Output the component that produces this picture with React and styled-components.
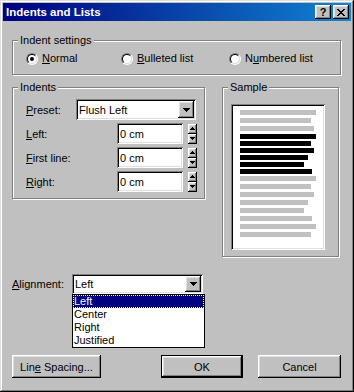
import React from "react";
import styled, { createGlobalStyle, css } from "styled-components";

const GlobalStyle = createGlobalStyle`
  html, body {
    margin: 0;
    padding: 0;
    background: #c0c0c0;
  }
  body {
    font-family: "Liberation Sans", Arial, sans-serif;
    font-size: 11px;
    color: #000;
  }
  * {
    box-sizing: border-box;
  }
`;

// classic 3d bevels
const raised = css`
  box-shadow: inset -1px -1px #000, inset 1px 1px #fff, inset -2px -2px #808080,
    inset 2px 2px #dfdfdf;
`;

const sunken = css`
  box-shadow: inset 1px 1px #808080, inset -1px -1px #fff, inset 2px 2px #000,
    inset -2px -2px #dfdfdf;
`;

const Window = styled.div`
  width: 354px;
  height: 392px;
  padding: 3px;
  background: #c0c0c0;
  display: flex;
  flex-direction: column;
  box-shadow: inset -1px -1px #000, inset 1px 1px #dfdfdf, inset -2px -2px #808080,
    inset 2px 2px #fff;
`;

const TitleBar = styled.div`
  height: 18px;
  display: flex;
  align-items: center;
  padding: 0 2px 0 3px;
  background: linear-gradient(90deg, #000080, #1084d0);
`;

const TitleText = styled.span`
  flex: 1;
  color: #fff;
  font-weight: bold;
  font-size: 11.5px;
`;

const CaptionButton = styled.span`
  width: 16px;
  height: 14px;
  margin-left: ${(p) => (p.$gap ? "2px" : "0")};
  background: #c0c0c0;
  display: grid;
  place-items: center;
  font-weight: bold;
  font-size: 11px;
  line-height: 14px;
  ${raised}
`;

const Body = styled.div`
  flex: 1;
  display: flex;
  flex-direction: column;
  padding: 0 10px 0 9px;
`;

const Group = styled.fieldset`
  margin: ${(p) => p.$margin || "0"};
  padding: 0;
  min-width: 0;
  width: ${(p) => (p.$w ? `${p.$w}px` : "auto")};
  border: 1px solid #808080;
  box-shadow: inset 1px 1px #fff, 1px 1px #fff;
`;

const Legend = styled.legend`
  margin-left: 5px;
  padding: 0 2px;
  line-height: 13px;
  background: #c0c0c0;
`;

const GroupInner = styled.div`
  padding: ${(p) => p.$pad};
`;

const RadioRow = styled.div`
  display: grid;
  grid-template-columns: 95px 108px auto;
  height: 13px;
`;

const RadioOption = styled.label`
  display: flex;
  align-items: center;
  gap: 4px;
  line-height: 13px;
`;

const RadioMark = styled.span`
  position: relative;
  flex: none;
  width: 12px;
  height: 12px;
  border-radius: 50%;
  border: 1px solid;
  border-color: #808080 #fff #fff #808080;

  &::before {
    content: "";
    position: absolute;
    inset: 0;
    border-radius: 50%;
    border: 1px solid;
    border-color: #000 #dfdfdf #dfdfdf #000;
    background: #fff;
  }

  &::after {
    content: "";
    display: ${(p) => (p.$checked ? "block" : "none")};
    position: absolute;
    left: 3px;
    top: 3px;
    width: 4px;
    height: 4px;
    border-radius: 50%;
    background: #000;
  }
`;

const MiddleRow = styled.div`
  display: flex;
  align-items: flex-start;
  gap: 17px;
  margin-top: 6px;
`;

const FieldList = styled.div`
  display: flex;
  flex-direction: column;
  gap: 3px;
`;

const FieldRow = styled.div`
  display: flex;
  align-items: center;
  justify-content: space-between;
  height: 21px;
`;

const Controls = styled.div`
  display: flex;
  align-items: center;
  gap: 5px;
`;

const Combo = styled.div`
  position: relative;
  width: ${(p) => p.$w}px;
  height: ${(p) => p.$h}px;
  margin-right: ${(p) => p.$mr || 0}px;
  padding: 2px;
  background: #fff;
  display: flex;
  align-items: stretch;
  ${sunken}
`;

const ComboText = styled.span`
  flex: 1;
  padding-left: 1px;
  display: flex;
  align-items: center;
`;

const ComboButton = styled.span`
  width: 16px;
  background: #c0c0c0;
  display: grid;
  place-items: center;
  ${raised}
`;

const Edit = styled.div`
  width: 66px;
  height: 21px;
  padding-left: 3px;
  background: #fff;
  display: flex;
  align-items: center;
  ${sunken}
`;

const Spin = styled.div`
  display: flex;
  flex-direction: column;
  width: 9px;
`;

const SpinButton = styled.span`
  height: 10px;
  background: #c0c0c0;
  display: grid;
  place-items: center;
  ${raised}
`;

const Page = styled.div`
  width: 94px;
  height: 146px;
  padding: 6px 0 0 9px;
  background: #fff;
  box-shadow: inset 1px 1px #808080, inset -1px -1px #fff, inset 2px 2px #000,
    inset -2px -2px #dfdfdf;
`;

const SampleLine = styled.div`
  height: 5px;
  margin-bottom: ${(p) => (p.$dark ? 2 : 3)}px;
  background: ${(p) => (p.$dark ? "#000" : "#c0c0c0")};
`;

const AlignRow = styled.div`
  display: flex;
  align-items: center;
  margin-top: 17px;
`;

const AlignLabel = styled.span`
  width: 60px;
`;

const DropList = styled.ul`
  position: absolute;
  top: 100%;
  left: 0;
  width: 133px;
  margin: 0;
  padding: 0;
  list-style: none;
  background: #fff;
  border: 1px solid #000;
  z-index: 2;
`;

const DropItem = styled.li`
  height: 13px;
  line-height: 13px;
  padding-left: 1px;
  background: ${(p) => (p.$selected ? "#000080" : "transparent")};
  color: ${(p) => (p.$selected ? "#fff" : "#000")};
  outline: ${(p) => (p.$selected ? "1px dotted #ffffa0" : "none")};
  outline-offset: -1px;
`;

const ButtonRow = styled.div`
  display: flex;
  justify-content: space-between;
  margin-top: 61px;
`;

const ButtonGroup = styled.div`
  display: flex;
  gap: 15px;
`;

const Button = styled.button`
  width: ${(p) => p.$w}px;
  height: 23px;
  padding: 0;
  font: inherit;
  color: #000;
  background: #c0c0c0;
  border: ${(p) => (p.$default ? "1px solid #000" : "none")};
  ${raised}
`;

const DownArrow = () => (
  <svg width="7" height="4" viewBox="0 0 7 4" shapeRendering="crispEdges">
    <path d="M0 0H7V1H6V2H5V3H4V4H3V3H2V2H1V1H0Z" fill="#000" />
  </svg>
);

const SpinArrow = ({ up }) => (
  <svg width="5" height="3" viewBox="0 0 5 3" shapeRendering="crispEdges">
    <path
      d={up ? "M2 0H3V1H4V2H5V3H0V2H1V1H2Z" : "M0 0H5V1H4V2H3V3H2V2H1V1H0Z"}
      fill="#000"
    />
  </svg>
);

const CloseGlyph = () => (
  <svg width="8" height="7" viewBox="0 0 8 7" shapeRendering="crispEdges">
    <path
      d="M0 0H2V1H3V2H5V1H6V0H8V1H7V2H6V3H5V4H6V5H7V6H8V7H6V6H5V5H3V6H2V7H0V6H1V5H2V4H3V3H2V2H1V1H0Z"
      fill="#000"
    />
  </svg>
);

const sampleLines = [
  [76, false], [71, false], [74, false],
  [76, true], [71, true], [74, true], [68, true], [64, true], [72, true],
  [76, false], [71, false], [74, false], [68, false], [64, false], [72, false],
  [76, false], [71, false],
];

const indentFields = [
  { key: "L", rest: "eft:" },
  { key: "F", rest: "irst line:" },
  { key: "R", rest: "ight:" },
];

const SpinEdit = () => (
  <Controls>
    <Edit>0 cm</Edit>
    <Spin>
      <SpinButton>
        <SpinArrow up />
      </SpinButton>
      <SpinButton>
        <SpinArrow />
      </SpinButton>
    </Spin>
  </Controls>
);

const App = () => {
  return (
    <>
      <GlobalStyle />
      <Window>
        <TitleBar>
          <TitleText>Indents and Lists</TitleText>
          <CaptionButton>?</CaptionButton>
          <CaptionButton $gap>
            <CloseGlyph />
          </CaptionButton>
        </TitleBar>

        <Body>
          <Group $margin="13px 0 0">
            <Legend>Indent settings</Legend>
            <GroupInner $pad="5px 0 9px 13px">
              <RadioRow>
                <RadioOption>
                  <RadioMark $checked />
                  <span>
                    <u>N</u>ormal
                  </span>
                </RadioOption>
                <RadioOption>
                  <RadioMark />
                  <span>
                    <u>B</u>ulleted list
                  </span>
                </RadioOption>
                <RadioOption>
                  <RadioMark />
                  <span>
                    N<u>u</u>mbered list
                  </span>
                </RadioOption>
              </RadioRow>
            </GroupInner>
          </Group>

          <MiddleRow>
            <Group $w={193}>
              <Legend>Indents</Legend>
              <GroupInner $pad="5px 7px 6px 13px">
                <FieldList>
                  <FieldRow>
                    <span>
                      <u>P</u>reset:
                    </span>
                    <Combo $w={120} $h={21} $mr={1}>
                      <ComboText>Flush Left</ComboText>
                      <ComboButton>
                        <DownArrow />
                      </ComboButton>
                    </Combo>
                  </FieldRow>
                  {indentFields.map((f) => (
                    <FieldRow key={f.key}>
                      <span>
                        <u>{f.key}</u>
                        {f.rest}
                      </span>
                      <SpinEdit />
                    </FieldRow>
                  ))}
                </FieldList>
              </GroupInner>
            </Group>

            <Group $w={117}>
              <Legend>Sample</Legend>
              <GroupInner $pad="10px 0 6px 8px">
                <Page>
                  {sampleLines.map(([w, dark], i) => (
                    <SampleLine key={i} $dark={dark} style={{ width: w }} />
                  ))}
                </Page>
              </GroupInner>
            </Group>
          </MiddleRow>

          <AlignRow>
            <AlignLabel>
              <u>A</u>lignment:
            </AlignLabel>
            <Combo $w={131} $h={20}>
              <ComboText>Left</ComboText>
              <ComboButton>
                <DownArrow />
              </ComboButton>
              <DropList>
                <DropItem $selected>Left</DropItem>
                <DropItem>Center</DropItem>
                <DropItem>Right</DropItem>
                <DropItem>Justified</DropItem>
              </DropList>
            </Combo>
          </AlignRow>

          <ButtonRow>
            <Button $w={89}>
              Lin<u>e</u> Spacing...
            </Button>
            <ButtonGroup>
              <Button $w={82} $default>
                OK
              </Button>
              <Button $w={83}>Cancel</Button>
            </ButtonGroup>
          </ButtonRow>
        </Body>
      </Window>
    </>
  );
};

export default App;
